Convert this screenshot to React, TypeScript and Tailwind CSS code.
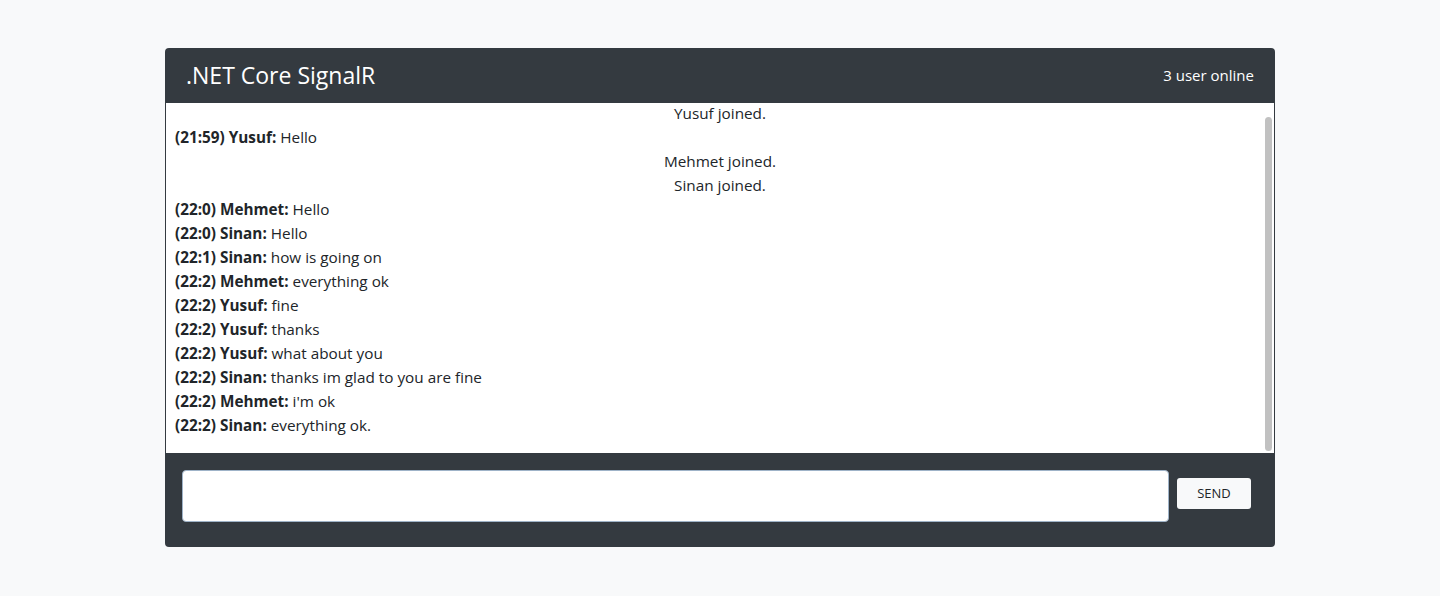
type Line =
  | { kind: 'join'; text: string }
  | { kind: 'msg'; time: string; user: string; text: string };

const lines: Line[] = [
  { kind: 'join', text: 'Yusuf joined.' },
  { kind: 'msg', time: '21:59', user: 'Yusuf', text: 'Hello' },
  { kind: 'join', text: 'Mehmet joined.' },
  { kind: 'join', text: 'Sinan joined.' },
  { kind: 'msg', time: '22:0', user: 'Mehmet', text: 'Hello' },
  { kind: 'msg', time: '22:0', user: 'Sinan', text: 'Hello' },
  { kind: 'msg', time: '22:1', user: 'Sinan', text: 'how is going on' },
  { kind: 'msg', time: '22:2', user: 'Mehmet', text: 'everything ok' },
  { kind: 'msg', time: '22:2', user: 'Yusuf', text: 'fine' },
  { kind: 'msg', time: '22:2', user: 'Yusuf', text: 'thanks' },
  { kind: 'msg', time: '22:2', user: 'Yusuf', text: 'what about you' },
  { kind: 'msg', time: '22:2', user: 'Sinan', text: 'thanks im glad to you are fine' },
  { kind: 'msg', time: '22:2', user: 'Mehmet', text: "i'm ok" },
  { kind: 'msg', time: '22:2', user: 'Sinan', text: 'everything ok.' },
];

export default function App() {
  return (
    <div className="min-h-[596px] w-full bg-[#f8f9fa] pt-[48px] font-['Open_Sans',sans-serif] text-[#212529]">
      <div className="mx-auto w-[1110px] overflow-hidden rounded-[4px] bg-[#343a40]">
        <div className="flex h-[55px] items-center justify-between pl-[21px] pr-[21px]">
          <h1 className="text-[23px] text-white">.NET Core SignalR</h1>
          <span className="text-[15px] text-white">3 user online</span>
        </div>

        <div className="mx-px flex h-[350px] bg-white">
          <div className="flex-1 overflow-hidden pl-[9px] text-[15.3px] leading-[24px]">
            <div className="-mt-[2px]">
              {lines.map((l, i) =>
                l.kind === 'join' ? (
                  <div key={i} className="h-[24px] text-center">
                    {l.text}
                  </div>
                ) : (
                  <div key={i} className="h-[24px]">
                    <b className="font-bold">
                      ({l.time}) {l.user}:
                    </b>{' '}
                    {l.text}
                  </div>
                )
              )}
            </div>
          </div>
          <div className="flex w-[9px] flex-col pb-[2px] pr-[2px] pt-[14px]">
            <div className="flex-1 rounded-full bg-[#c1c1c1]"></div>
          </div>
        </div>

        <div className="flex h-[94px] items-start pl-[17px] pr-[24px] pt-[17px]">
          <input
            type="text"
            className="h-[52px] flex-1 rounded-[4px] border border-[#9fb3c8] bg-white px-3 outline-none"
          />
          <button className="ml-[8px] mt-[8px] h-[31px] w-[74px] rounded-[3px] bg-[#f8f9fa] text-[13px] text-[#212529]">
            SEND
          </button>
        </div>
      </div>
    </div>
  );
}
